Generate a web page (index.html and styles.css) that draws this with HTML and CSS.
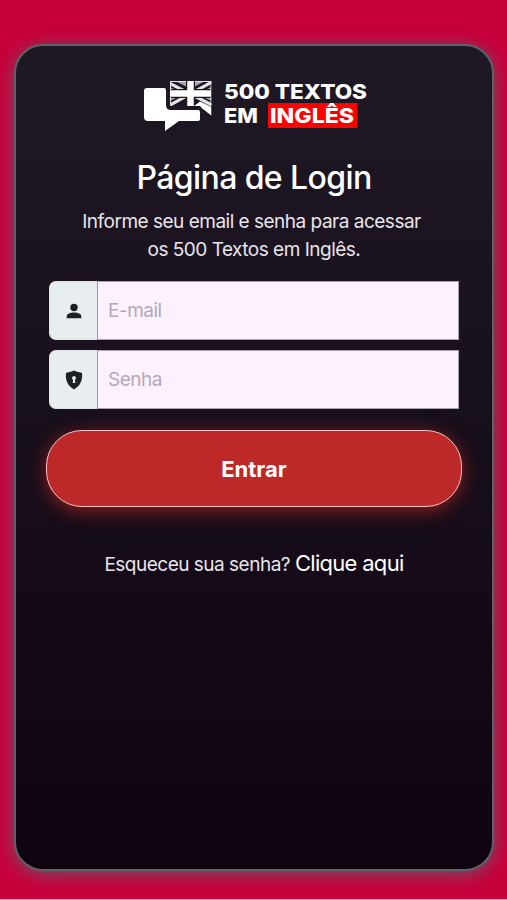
FILE: index.html
```html
<!DOCTYPE html>
<html lang="pt-BR">
<head>
    <meta charset="UTF-8">
    <meta name="viewport" content="width=device-width, initial-scale=1.0">
    <title>500 Textos em Inglês - Login</title>
    <link rel="stylesheet" href="styles.css">
</head>
<body>
    <main class="login-card">
        <svg class="logo" width="230" height="56" viewBox="0 0 230 56" role="img" aria-label="500 Textos em Inglês">
            <defs>
                <clipPath id="flag-clip">
                    <path d="M27 3H68.500V38L60 31.500L57 28H27Z"/>
                </clipPath>
            </defs>
            <!-- flag bubble -->
            <g clip-path="url(#flag-clip)">
                <rect x="27" y="3" width="42" height="25" fill="#1d1723"/>
                <path d="M26 5L69 27M69 4L27 27" stroke="#e4e2e6" stroke-width="3.200"/>
                <path d="M32 3H43V8.500ZM52 3H62L52 8.500ZM27 9V12.500H34ZM68.500 9V12.500H61ZM27 19H35L27 23ZM60 19H68.500V23Z" fill="#a5a2a9"/>
                <path d="M47.500 3V28M27 15.500H68.500" stroke="#1d1723" stroke-width="9"/>
                <path d="M47.500 3V28M27 15.500H68.500" stroke="#fff" stroke-width="6.500"/>
                <path d="M27 3.500H43M52 3.500H68M68 4V12M68 19V28M27.500 4V12M27.500 19V27" stroke="#e4e2e6"/>
                <path d="M51 28L57 23.500L68.500 29V38L60 31Z" fill="#fff"/>
            </g>
            <!-- front bubble -->
            <path d="M4 10H21Q23 10 23 12V27Q23 32 28 32H55Q57 32 57 34V41Q57 43 55 43H36L22 53V43H5Q1 43 1 39V13Q1 10 4 10Z" fill="#fff"/>
            <rect x="125" y="25" width="89.500" height="25" fill="#f00"/>
            <text class="logo-text" x="81" y="20.500" textLength="143" lengthAdjust="spacingAndGlyphs">500 TEXTOS</text>
            <text class="logo-text" x="81" y="45" textLength="34" lengthAdjust="spacingAndGlyphs">EM</text>
            <text class="logo-text" x="127" y="45" textLength="84" lengthAdjust="spacingAndGlyphs">INGLÊS</text>
        </svg>

        <h1 class="title">Página de Login</h1>
        <p class="subtitle">Informe seu email e senha para acessar<br>&nbsp;os 500 Textos em Inglês.</p>

        <form class="login-form">
            <div class="input-group">
                <span class="input-icon">
                    <svg width="16" height="16" viewBox="0 0 16 16" fill="#1b2226">
                        <circle cx="8" cy="4.500" r="3.700"/>
                        <path d="M.7 15.200V13.500C.7 10.500 4.500 9.500 8 9.500S15.300 10.500 15.300 13.500V15.200Z"/>
                    </svg>
                </span>
                <input class="input-field" type="email" placeholder="E-mail">
            </div>
            <div class="input-group">
                <span class="input-icon">
                    <svg width="18" height="20" viewBox="0 0 18 20" fill="#1b2226">
                        <path fill-rule="evenodd" d="M9 .5C11 1.500 13.500 2.300 16 2.600Q17 2.800 17.100 4C17.500 11 15 16 9 19.500C3 16 .5 11 .9 4Q1 2.800 2 2.600C4.500 2.300 7 1.500 9 .5ZM9 6A2 2 0 0 0 8 9.700L7.700 13H10.300L10 9.700A2 2 0 0 0 9 6Z"/>
                    </svg>
                </span>
                <input class="input-field" type="password" placeholder="Senha">
            </div>
            <button class="submit-button" type="submit">Entrar</button>
        </form>

        <p class="forgot">Esqueceu sua senha? <a class="forgot-link" href="#">Clique aqui</a></p>
    </main>
</body>
</html>
```

FILE: styles.css
```css
* {
    box-sizing: border-box;
}

body {
    margin: 0;
    height: 900px;
    padding: 44px 13px 0 14px;
    background-color: #c7003b;
    border-bottom: 1px solid #f3a0b6;
    font-family: Inter, "Liberation Sans", sans-serif;
    color: #fff;
    overflow: hidden;
}

.login-card {
    display: flex;
    flex-direction: column;
    align-items: center;
    height: 827px;
    padding: 32px 32px 0;
    border: 2px solid #5c626c;
    border-radius: 29px;
    background: linear-gradient(#1f1925, #150b18 65%, #0f030f);
    box-shadow: 0 3px 17px rgba(92, 98, 108, 0.85);
}

.logo {
    flex: none;
    margin-left: 7px;
}

.logo-text {
    font-size: 20.5px;
    font-weight: 800;
    fill: #fff;
}

.title {
    margin: 23px 0 0;
    font-size: 32px;
    font-weight: 500;
    line-height: 42px;
    letter-spacing: -0.6px;
    white-space: nowrap;
}

.subtitle {
    margin: 9px 5px 0 0;
    font-size: 19px;
    line-height: 28px;
    letter-spacing: -0.5px;
    text-align: center;
    white-space: nowrap;
    color: #e9e5ec;
}

.login-form {
    display: flex;
    flex-direction: column;
    align-items: center;
    gap: 10px;
    width: 416px;
    margin-top: 17px;
}

.input-group {
    display: flex;
    width: 410px;
    height: 59px;
}

.input-icon {
    display: flex;
    align-items: center;
    justify-content: center;
    width: 49px;
    border: 1px solid #dfe3e8;
    border-right: 1px solid #9a98a5;
    border-radius: 7px 0 0 7px;
    background-color: #e8edef;
}

.input-field {
    flex: 1;
    min-width: 0;
    padding: 0 10px;
    border: 1px solid #aaa0b2;
    border-left: none;
    border-radius: 0;
    background-color: #fdf0ff;
    font-family: inherit;
    font-size: 19px;
    letter-spacing: -0.5px;
}

.input-field::placeholder {
    color: #b3a9b6;
}

.submit-button {
    width: 416px;
    height: 77px;
    margin-top: 11px;
    border: 1.5px solid #f3c4c4;
    border-radius: 36px;
    background-color: #bd2928;
    box-shadow: 0 4px 18px rgba(176, 36, 32, 0.75);
    font-family: inherit;
    font-size: 22px;
    font-weight: 700;
    color: #fff;
}

.forgot {
    margin: 41px 0 0;
    font-size: 19px;
    line-height: 30px;
    letter-spacing: -0.5px;
    white-space: nowrap;
    color: #e9e5ec;
}

.forgot-link {
    font-size: 22px;
    letter-spacing: -0.7px;
    color: #fff;
    text-decoration: none;
}
```
